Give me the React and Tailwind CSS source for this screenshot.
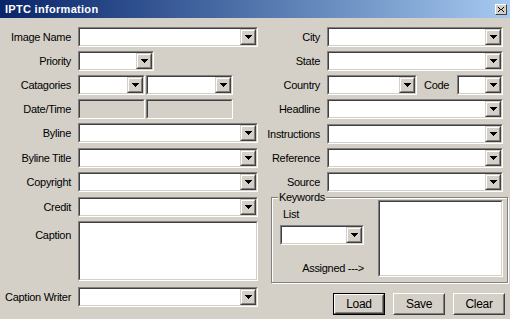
import React from "react";

function Arrow() {
  return (
    <svg width="7" height="4" viewBox="0 0 7 4" shapeRendering="crispEdges">
      <rect x="0" y="0" width="7" height="1" fill="#000" />
      <rect x="1" y="1" width="5" height="1" fill="#000" />
      <rect x="2" y="2" width="3" height="1" fill="#000" />
      <rect x="3" y="3" width="1" height="1" fill="#000" />
    </svg>
  );
}

function DropBtn() {
  return (
    <div className="w-[16px] h-full border border-t-[#d4d0c8] border-l-[#d4d0c8] border-b-[#404040] border-r-[#404040] bg-[#d4d0c8]">
      <div className="h-full w-full border border-t-white border-l-white border-b-[#808080] border-r-[#808080] flex items-center justify-center">
        <Arrow />
      </div>
    </div>
  );
}

function Sunken({ className = "", inner = "", children }) {
  return (
    <div className={`border border-t-[#808080] border-l-[#808080] border-b-white border-r-white ${className}`}>
      <div className={`h-full w-full border border-t-[#404040] border-l-[#404040] border-b-[#d4d0c8] border-r-[#d4d0c8] ${inner}`}>
        {children}
      </div>
    </div>
  );
}

function Combo({ className = "" }) {
  return (
    <Sunken className={`h-[20px] ${className}`} inner="bg-white flex justify-end">
      <DropBtn />
    </Sunken>
  );
}

function Button({ label, def = false }) {
  const body = (
    <div className="h-full w-full border border-t-white border-l-white border-b-[#404040] border-r-[#404040]">
      <div className="h-full w-full border border-t-[#d4d0c8] border-l-[#d4d0c8] border-b-[#808080] border-r-[#808080] flex items-center justify-center text-[12px]">
        {label}
      </div>
    </div>
  );
  return def ? (
    <div className="w-[52px] h-[22px] border border-black">{body}</div>
  ) : (
    <div className="w-[52px] h-[22px]">{body}</div>
  );
}

function LRow({ label, className = "", children, items = "items-center", labelCls = "" }) {
  return (
    <div className={`flex ${items} ${className}`}>
      <div className={`w-[71px] text-right leading-[13px] whitespace-nowrap ${labelCls}`}>{label}</div>
      <div className="ml-[7px] flex gap-[1px]">{children}</div>
    </div>
  );
}

function RRow({ label, className = "", children }) {
  return (
    <div className={`flex items-center ${className}`}>
      <div className="w-[60px] text-right leading-[13px] whitespace-nowrap">{label}</div>
      <div className="ml-[7px] flex items-center">{children}</div>
    </div>
  );
}

export default function App() {
  return (
    <div className="w-[510px] h-[319px] bg-[#d4d0c8] flex flex-col overflow-hidden text-black text-[11px] tracking-[-0.3px] font-['Liberation_Sans',Arial,sans-serif]">
      <div className="h-[18px] flex items-center justify-between bg-gradient-to-r from-[#0a246a] to-[#a6caf0] pl-[5px] pr-[3px]">
        <span className="text-white font-bold text-[11px] tracking-[0.3px] leading-[13px]">IPTC information</span>
        <div className="w-[12px] h-[11px] border border-t-white border-l-white border-b-[#404040] border-r-[#404040] bg-[#d4d0c8] flex items-center justify-center">
          <svg width="6" height="5" viewBox="0 0 6 5" shapeRendering="crispEdges">
            <path d="M0 0h1v1h-1zM5 0h1v1h-1zM1 1h1v1h-1zM4 1h1v1h-1zM2 2h2v1h-2zM1 3h1v1h-1zM4 3h1v1h-1zM0 4h1v1h-1zM5 4h1v1h-1z" fill="#000" />
          </svg>
        </div>
      </div>

      <div className="flex flex-1">
        <div className="w-[260px] flex flex-col pt-[9px]">
          <LRow label="Image Name"><Combo className="w-[180px]" /></LRow>
          <LRow label="Priority" className="mt-[4px]"><Combo className="w-[76px]" /></LRow>
          <LRow label="Catagories" className="mt-[4px]">
            <Combo className="w-[67px]" />
            <Combo className="w-[87px]" />
          </LRow>
          <LRow label="Date/Time" className="mt-[4px]">
            <Sunken className="w-[67px] h-[20px]" inner="bg-[#d4d0c8]" />
            <Sunken className="w-[87px] h-[20px]" inner="bg-[#d4d0c8]" />
          </LRow>
          <LRow label="Byline" className="mt-[4px]"><Combo className="w-[180px]" /></LRow>
          <LRow label="Byline Title" className="mt-[5px]"><Combo className="w-[180px]" /></LRow>
          <LRow label="Copyright" className="mt-[4px]"><Combo className="w-[180px]" /></LRow>
          <LRow label="Credit" className="mt-[5px]"><Combo className="w-[180px]" /></LRow>
          <LRow label="Caption" className="mt-[4px]" items="items-start" labelCls="pt-[8px]">
            <Sunken className="w-[180px] h-[60px]" inner="bg-white" />
          </LRow>
          <LRow label="Caption Writer" className="mt-[6px]"><Combo className="w-[180px]" /></LRow>
        </div>

        <div className="flex-1 flex flex-col pt-[9px]">
          <RRow label="City"><Combo className="w-[176px]" /></RRow>
          <RRow label="State" className="mt-[4px]"><Combo className="w-[176px]" /></RRow>
          <RRow label="Country" className="mt-[4px]">
            <Combo className="w-[90px]" />
            <span className="w-[33px] ml-[7px] leading-[13px]">Code</span>
            <Combo className="w-[46px]" />
          </RRow>
          <RRow label="Headline" className="mt-[4px]"><Combo className="w-[176px]" /></RRow>
          <RRow label="Instructions" className="mt-[5px]"><Combo className="w-[176px]" /></RRow>
          <RRow label="Reference" className="mt-[4px]"><Combo className="w-[176px]" /></RRow>
          <RRow label="Source" className="mt-[4px]"><Combo className="w-[176px]" /></RRow>

          <div className="relative mt-[5px] ml-[11px] w-[237px] h-[86px] border border-[#808080] shadow-[1px_1px_0_#ffffff,inset_1px_1px_0_#ffffff] flex pl-[8px] pt-[2px]">
            <span className="absolute left-[6px] top-[-7px] px-[1px] bg-[#d4d0c8] leading-[13px]">Keywords</span>
            <div className="w-[84px] flex flex-col pb-[7px]">
              <span className="mt-[8px] pl-[3px] leading-[13px]">List</span>
              <Combo className="w-[84px] mt-[4px]" />
              <span className="mt-auto text-right leading-[13px]">Assigned ---&gt;</span>
            </div>
            <Sunken className="ml-[14px] w-[125px] h-[77px]" inner="bg-white" />
          </div>

          <div className="flex justify-end gap-[8px] pr-[5px] mt-[10px]">
            <Button label="Load" def />
            <Button label="Save" />
            <Button label="Clear" />
          </div>
        </div>
      </div>
    </div>
  );
}
